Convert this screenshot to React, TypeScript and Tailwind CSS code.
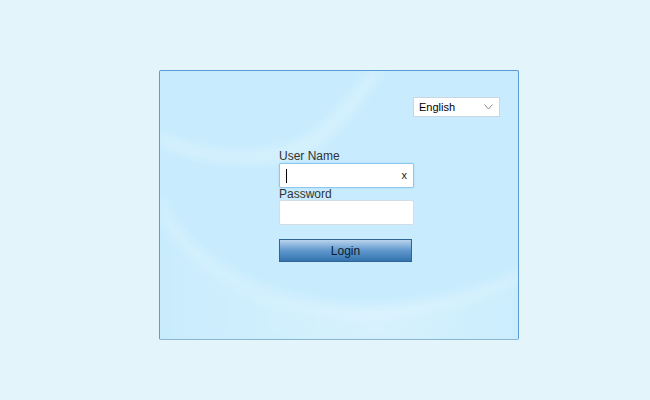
import React from 'react';

const App: React.FC = () => (
  <div className="w-[650px] h-[400px] bg-[#e3f4fb] pt-[70px] pl-[159px] font-['Liberation_Sans',Arial,sans-serif]">
    <div className="relative w-[360px] h-[270px] bg-[#c8ecfd] border border-[#5a9ad6] border-b-[#8db6d6] rounded-[2px] overflow-hidden">
      {/* Soft background swooshes */}
      <svg className="absolute inset-0" width="360" height="270" viewBox="0 0 360 270">
        <defs>
          <filter id="soft" x="-20%" y="-20%" width="140%" height="140%">
            <feGaussianBlur stdDeviation="4" />
          </filter>
          <linearGradient id="sw" x1="0" y1="0" x2="1" y2="0">
            <stop offset="0" stopColor="#ffffff" stopOpacity="0.05" />
            <stop offset="0.6" stopColor="#ffffff" stopOpacity="0.55" />
            <stop offset="1" stopColor="#ffffff" stopOpacity="0.1" />
          </linearGradient>
        </defs>
        <path d="M0 60 C 50 85, 120 88, 160 55 C 180 38, 195 15, 210 0 L 225 0 C 205 25, 185 55, 165 72 C 120 105, 40 95, 0 75 Z" fill="#ffffff" opacity="0.22" filter="url(#soft)" />
        <path d="M0 150 C 25 205, 100 240, 205 240 C 275 238, 330 220, 360 205 L 360 270 L 0 270 Z" fill="url(#sw)" opacity="0.5" filter="url(#soft)" />
        <path d="M0 120 C 30 190, 110 232, 210 232 C 280 230, 330 212, 360 198 L 360 212 C 320 230, 270 246, 205 246 C 110 246, 30 210, 0 150 Z" fill="#ffffff" opacity="0.18" filter="url(#soft)" />
      </svg>

      <div className="relative flex flex-col">
        <div className="flex justify-end pt-[26px] pr-[18px]">
          <div className="w-[87px] h-[20px] bg-white border border-[#c9d6df] flex items-center justify-between pl-[5px] pr-[6px] text-[11px] text-black">
            <span>English</span>
            <svg width="9" height="6" viewBox="0 0 9 6">
              <path d="M0.5 0.5 L4.5 5 L8.5 0.5" fill="none" stroke="#8a8a8a" strokeWidth="1" />
            </svg>
          </div>
        </div>

        <div className="ml-[119px] mt-[32px] flex flex-col w-[135px] text-[12px] text-[#333]">
          <label className="leading-[14px]">User Name</label>
          <div className="h-[25px] bg-white border border-[#8ec6ee] rounded-[2px] flex items-center justify-between pl-[6px] pr-[6px] shadow-[0_0_2px_#9fd2f5]">
            <span className="w-px h-[14px] bg-black" />
            <span className="text-[11px] text-[#222] leading-none">x</span>
          </div>
          <label className="leading-[12px]">Password</label>
          <div className="h-[25px] bg-white border border-[#d3dde5] rounded-[2px]" />
          <button className="mt-[14px] w-[133px] h-[23px] border border-[#2e6496] bg-gradient-to-b from-[#b9d3ec] via-[#5f98cd] to-[#3574b0] text-[12px] text-[#0c1c2e]">
            Login
          </button>
        </div>
      </div>
    </div>
  </div>
);

export default App;
